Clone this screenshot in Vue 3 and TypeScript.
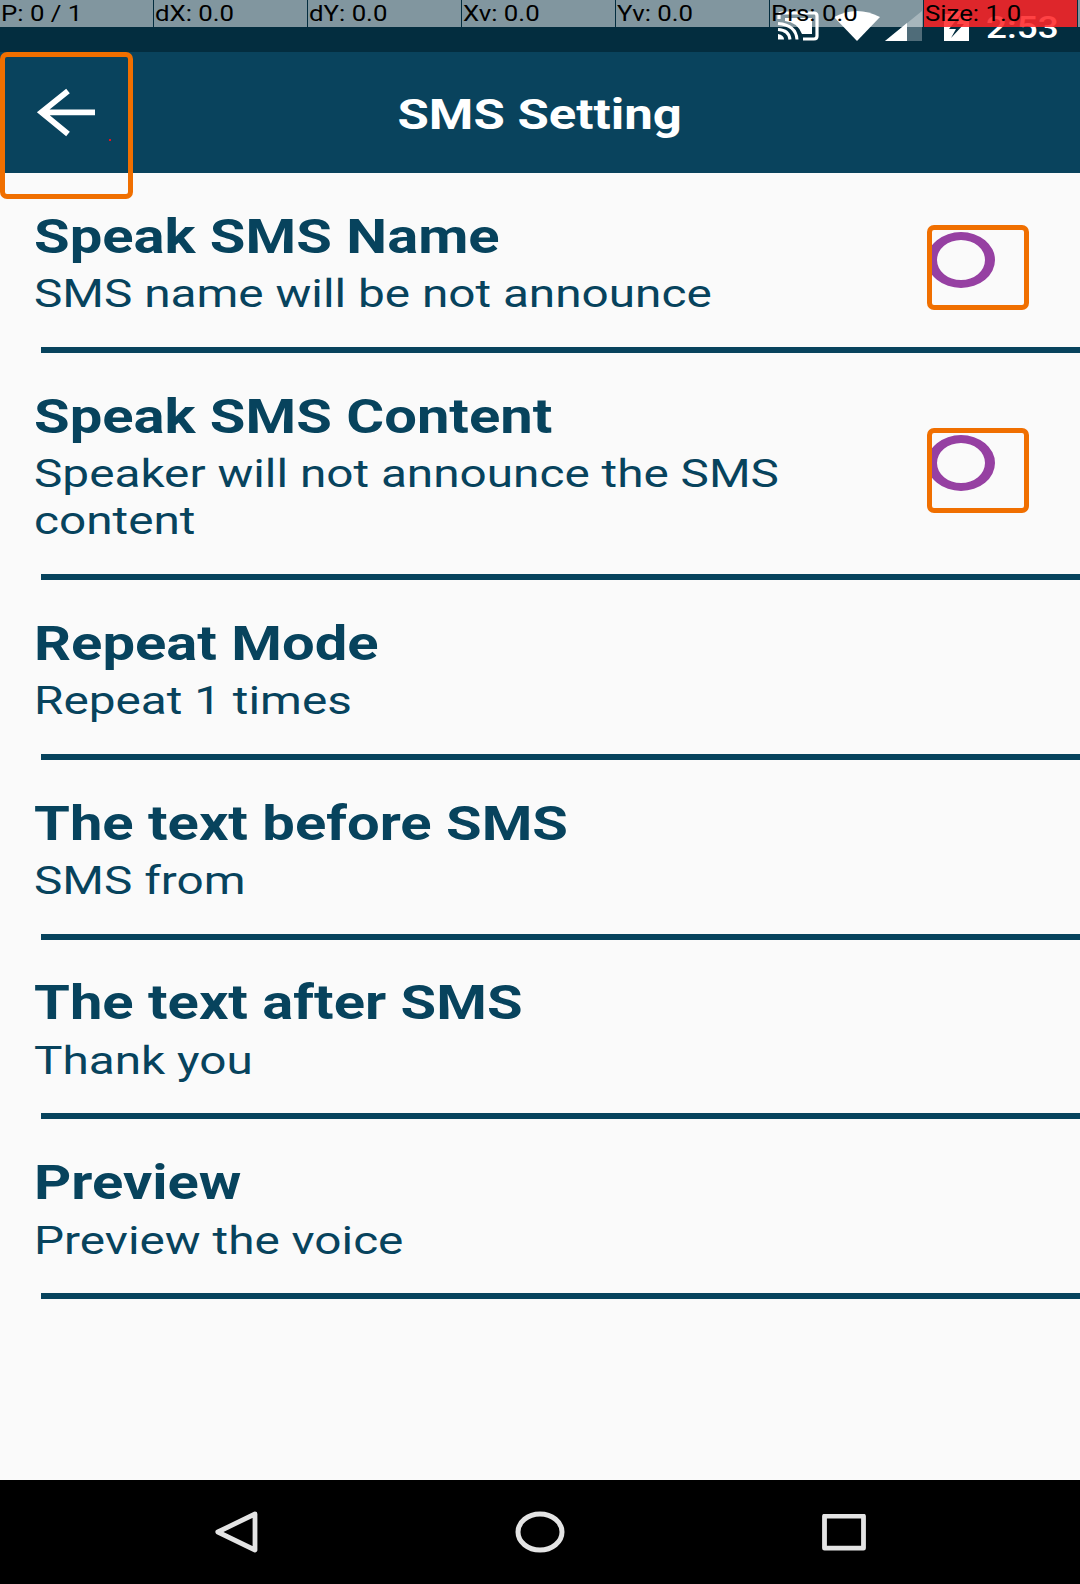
<script setup lang="ts">
interface Setting {
  title: string
  lines: string[]
  toggle?: boolean
}

const readings: string[] = ['P: 0 / 1', 'dX: 0.0', 'dY: 0.0', 'Xv: 0.0', 'Yv: 0.0', 'Prs: 0.0', 'Size: 1.0']

const settings: Setting[] = [
  { title: 'Speak SMS Name', lines: ['SMS name will be not announce'], toggle: true },
  { title: 'Speak SMS Content', lines: ['Speaker will not announce the SMS', 'content'], toggle: true },
  { title: 'Repeat Mode', lines: ['Repeat 1 times'] },
  { title: 'The text before SMS', lines: ['SMS from'] },
  { title: 'The text after SMS', lines: ['Thank you'] },
  { title: 'Preview', lines: ['Preview the voice'] },
]
</script>

<template>
  <div class="screen">
    <div class="status">
      <svg class="cast" width="42" height="30" viewBox="0 0 42 30">
        <path d="M2 8V4Q2 2 5 2H37Q40 2 40 5V25Q40 28 37 28H26" fill="none" stroke="#fff" stroke-width="3.2" />
        <path d="M8 7H35V23H25Q20 11 8 10Z" fill="#fff" />
        <path d="M1 23Q7 24 7 28.500H1Z" fill="#fff" />
        <path d="M1 18.500Q12 19 13 28.500M1 12.500Q19 14 20 28.500" fill="none" stroke="#fff" stroke-width="3" />
      </svg>
      <svg class="wifi" width="46" height="30" viewBox="0 0 46 30">
        <path d="M0 6Q23 -6 46 6L23 30Z" fill="#fff" />
      </svg>
      <svg class="signal" width="37" height="30" viewBox="0 0 37 30">
        <path d="M0 30L37 0V30Z" fill="#fff" fill-opacity=".3" />
        <path d="M0 30L22 12V30Z" fill="#fff" />
      </svg>
      <svg class="battery" width="25" height="30" viewBox="0 0 25 30">
        <path d="M0 3H7V0H18V3H25V30H0Z" fill="#fff" />
        <path d="M17 3L5 18H12L7 27L20 13H13Z" fill="#032d3f" />
      </svg>
      <span class="clock">2:53</span>
    </div>

    <header class="bar">
      <button class="back" aria-label="Back">
        <svg width="123" height="137" viewBox="5 57 123 137">
          <path d="M95 112.300H42M68 91L41.500 112.300L68 134" fill="none" stroke="#fff" stroke-width="5.800" />
          <rect x="109" y="139" width="2" height="2" fill="#e8101c" />
        </svg>
      </button>
      <h1>SMS Setting</h1>
    </header>

    <main>
      <section v-for="item in settings" :key="item.title" class="row">
        <div class="copy">
          <h2>{{ item.title }}</h2>
          <p v-for="line in item.lines" :key="line">{{ line }}</p>
        </div>
        <div v-if="item.toggle" class="toggle">
          <svg width="92" height="75" viewBox="5 5 92 75">
            <path fill-rule="evenodd" fill="#9640a2" d="M0 35a34 28 0 1 0 68 0a34 28 0 1 0 -68 0ZM10 35a24 20 0 1 0 48 0a24 20 0 1 0 -48 0Z" />
          </svg>
        </div>
      </section>
    </main>

    <nav class="nav">
      <svg width="43" height="42" viewBox="0 0 43 42">
        <path d="M40 3L2.800 21L40 39Z" fill="none" stroke="#e4e4e4" stroke-width="4.800" stroke-linejoin="round" />
      </svg>
      <svg width="50" height="42" viewBox="0 0 50 42">
        <ellipse cx="25" cy="21" rx="22" ry="18" fill="none" stroke="#e4e4e4" stroke-width="5" />
      </svg>
      <svg width="44" height="37" viewBox="0 0 44 37">
        <rect x="2.500" y="2.200" width="39" height="32" fill="none" stroke="#e4e4e4" stroke-width="4.800" stroke-linejoin="round" />
      </svg>
    </nav>

    <div class="pointer">
      <div v-for="(r, i) in readings" :key="r" class="reading" :class="{ hot: i === 6 }"><span>{{ r }}</span></div>
      <div class="rest"></div>
    </div>
  </div>
</template>

<style>
body { margin: 0; background: #fafafa; }
</style>

<style scoped>
.screen {
  position: relative;
  width: 1080px;
  height: 1584px;
  overflow: hidden;
  display: flex;
  flex-direction: column;
  background: #fafafa;
  color: #07435d;
  font-family: Roboto, sans-serif;
}
.status {
  height: 52px;
  flex: none;
  box-sizing: border-box;
  padding: 11px 0 11px 777px;
  display: flex;
  align-items: flex-end;
  background: #032d3f;
}
.wifi { margin-left: 15px; }
.signal { margin-left: 5px; }
.battery { margin-left: 22px; }
.clock {
  margin: 0 0 -2px 17px;
  color: #fff;
  font-size: 30.600px;
  font-weight: 500;
  line-height: 30px;
  transform: scaleX(1.205);
  transform-origin: left;
}
.bar {
  position: relative;
  height: 121px;
  flex: none;
  box-sizing: border-box;
  padding-top: 4px;
  display: flex;
  align-items: center;
  justify-content: center;
  background: #09435d;
  color: #fff;
}
.back {
  position: absolute;
  left: 0;
  top: 0;
  width: 133px;
  height: 147px;
  box-sizing: border-box;
  padding: 0;
  border: 5px solid #f06f00;
  border-radius: 7px;
  background: none;
}
.back svg, .toggle svg { display: block; }
h1, h2, p { margin: 0; white-space: nowrap; }
h1 {
  font-size: 42.5px;
  font-weight: 700;
  line-height: 50px;
  transform: scaleX(1.198);
}
main { flex: 1; }
.row {
  display: flex;
  align-items: center;
  justify-content: space-between;
  padding: 0 51px 0 34px;
  background: linear-gradient(#07435d, #07435d) 41px 100% / 1039px 6px no-repeat;
}
.copy { padding: 31.900px 0 35.700px; }
h2, p { transform: translateY(.6px) scaleX(1.217); transform-origin: left; }
h2 { margin-bottom: 3.300px; font-size: 47.6px; font-weight: 700; line-height: 62px; }
p { font-size: 39.5px; line-height: 47px; transform: translateY(.4px) scaleX(1.208); }
.toggle {
  width: 102px;
  height: 85px;
  margin-top: 9px;
  box-sizing: border-box;
  border: 5px solid #f06f00;
  border-radius: 7px;
}
.nav {
  height: 104px;
  flex: none;
  box-sizing: border-box;
  padding: 0 214px 0 214.500px;
  display: flex;
  align-items: center;
  justify-content: space-between;
  background: #000;
}
.pointer {
  position: absolute;
  left: 0;
  top: 0;
  width: 1080px;
  height: 26.500px;
  display: grid;
  grid-template-columns: repeat(7, 153px) 2px;
  column-gap: 1px;
  color: #000;
}
.reading {
  padding-left: .5px;
  font-size: 21.700px;
  line-height: 27px;
  white-space: nowrap;
}
.reading, .rest { background: rgba(255, 255, 255, .5); }
.reading span { display: inline-block; transform: scaleX(1.188); transform-origin: left; }
.hot { background: rgba(255, 38, 40, .87); }
</style>
